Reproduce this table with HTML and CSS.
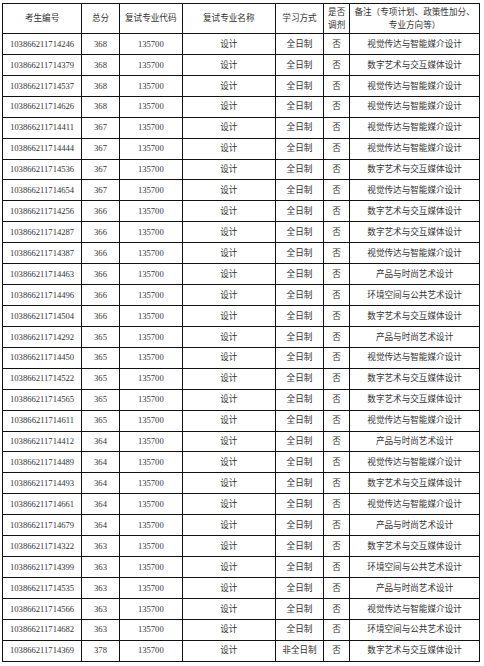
FILE: index.html
```html
<!DOCTYPE html>
<html lang="zh">
<head>
<meta charset="utf-8">
<link rel="stylesheet" href="styles.css">
</head>
<body>
<table class="list">
<colgroup>
<col class="c1"><col class="c2"><col class="c3"><col class="c4"><col class="c5"><col class="c6"><col class="c7">
</colgroup>
<thead>
<tr class="head">
<th>考生编号</th><th>总分</th><th>复试专业代码</th><th>复试专业名称</th><th>学习方式</th><th>是否<br>调剂</th><th>备注（专项计划、政策性加分、<br>专业方向等）</th>
</tr>
</thead>
<tbody>
<tr><td>103866211714246</td><td>368</td><td>135700</td><td>设计</td><td>全日制</td><td>否</td><td>视觉传达与智能媒介设计</td></tr>
<tr><td>103866211714379</td><td>368</td><td>135700</td><td>设计</td><td>全日制</td><td>否</td><td>数字艺术与交互媒体设计</td></tr>
<tr><td>103866211714537</td><td>368</td><td>135700</td><td>设计</td><td>全日制</td><td>否</td><td>视觉传达与智能媒介设计</td></tr>
<tr><td>103866211714626</td><td>368</td><td>135700</td><td>设计</td><td>全日制</td><td>否</td><td>视觉传达与智能媒介设计</td></tr>
<tr><td>103866211714411</td><td>367</td><td>135700</td><td>设计</td><td>全日制</td><td>否</td><td>视觉传达与智能媒介设计</td></tr>
<tr><td>103866211714444</td><td>367</td><td>135700</td><td>设计</td><td>全日制</td><td>否</td><td>视觉传达与智能媒介设计</td></tr>
<tr><td>103866211714536</td><td>367</td><td>135700</td><td>设计</td><td>全日制</td><td>否</td><td>数字艺术与交互媒体设计</td></tr>
<tr><td>103866211714654</td><td>367</td><td>135700</td><td>设计</td><td>全日制</td><td>否</td><td>视觉传达与智能媒介设计</td></tr>
<tr><td>103866211714256</td><td>366</td><td>135700</td><td>设计</td><td>全日制</td><td>否</td><td>数字艺术与交互媒体设计</td></tr>
<tr><td>103866211714287</td><td>366</td><td>135700</td><td>设计</td><td>全日制</td><td>否</td><td>数字艺术与交互媒体设计</td></tr>
<tr><td>103866211714387</td><td>366</td><td>135700</td><td>设计</td><td>全日制</td><td>否</td><td>视觉传达与智能媒介设计</td></tr>
<tr><td>103866211714463</td><td>366</td><td>135700</td><td>设计</td><td>全日制</td><td>否</td><td>产品与时尚艺术设计</td></tr>
<tr><td>103866211714496</td><td>366</td><td>135700</td><td>设计</td><td>全日制</td><td>否</td><td>环境空间与公共艺术设计</td></tr>
<tr><td>103866211714504</td><td>366</td><td>135700</td><td>设计</td><td>全日制</td><td>否</td><td>数字艺术与交互媒体设计</td></tr>
<tr><td>103866211714292</td><td>365</td><td>135700</td><td>设计</td><td>全日制</td><td>否</td><td>产品与时尚艺术设计</td></tr>
<tr><td>103866211714450</td><td>365</td><td>135700</td><td>设计</td><td>全日制</td><td>否</td><td>视觉传达与智能媒介设计</td></tr>
<tr><td>103866211714522</td><td>365</td><td>135700</td><td>设计</td><td>全日制</td><td>否</td><td>数字艺术与交互媒体设计</td></tr>
<tr><td>103866211714565</td><td>365</td><td>135700</td><td>设计</td><td>全日制</td><td>否</td><td>数字艺术与交互媒体设计</td></tr>
<tr><td>103866211714611</td><td>365</td><td>135700</td><td>设计</td><td>全日制</td><td>否</td><td>视觉传达与智能媒介设计</td></tr>
<tr><td>103866211714412</td><td>364</td><td>135700</td><td>设计</td><td>全日制</td><td>否</td><td>产品与时尚艺术设计</td></tr>
<tr><td>103866211714489</td><td>364</td><td>135700</td><td>设计</td><td>全日制</td><td>否</td><td>视觉传达与智能媒介设计</td></tr>
<tr><td>103866211714493</td><td>364</td><td>135700</td><td>设计</td><td>全日制</td><td>否</td><td>数字艺术与交互媒体设计</td></tr>
<tr><td>103866211714661</td><td>364</td><td>135700</td><td>设计</td><td>全日制</td><td>否</td><td>视觉传达与智能媒介设计</td></tr>
<tr><td>103866211714679</td><td>364</td><td>135700</td><td>设计</td><td>全日制</td><td>否</td><td>产品与时尚艺术设计</td></tr>
<tr><td>103866211714322</td><td>363</td><td>135700</td><td>设计</td><td>全日制</td><td>否</td><td>数字艺术与交互媒体设计</td></tr>
<tr><td>103866211714399</td><td>363</td><td>135700</td><td>设计</td><td>全日制</td><td>否</td><td>环境空间与公共艺术设计</td></tr>
<tr><td>103866211714535</td><td>363</td><td>135700</td><td>设计</td><td>全日制</td><td>否</td><td>产品与时尚艺术设计</td></tr>
<tr><td>103866211714566</td><td>363</td><td>135700</td><td>设计</td><td>全日制</td><td>否</td><td>视觉传达与智能媒介设计</td></tr>
<tr><td>103866211714682</td><td>363</td><td>135700</td><td>设计</td><td>全日制</td><td>否</td><td>环境空间与公共艺术设计</td></tr>
<tr><td>103866211714369</td><td>378</td><td>135700</td><td>设计</td><td>非全日制</td><td>否</td><td>数字艺术与交互媒体设计</td></tr>
</tbody>
</table>
</body>
</html>
```
FILE: styles.css
```css
html, body {
  margin: 0;
  padding: 0;
  background: #fff;
}
body {
  padding: 3px 0 0 2px;
  font-family: "Liberation Serif", "Noto Sans CJK SC", serif;
  color: #333;
}
.list {
  border-collapse: collapse;
  table-layout: fixed;
  width: 477px;
  font-size: 8.6px;
}
.c1 { width: 79.2px; }
.c2 { width: 37.6px; }
.c3 { width: 63px; }
.c4 { width: 93px; }
.c5 { width: 48.4px; }
.c6 { width: 26px; }
.c7 { width: 129.8px; }
.list th, .list td {
  border: 1px solid #111;
  padding: 0;
  text-align: center;
  vertical-align: middle;
  font-weight: normal;
  white-space: nowrap;
  line-height: 1;
}
.list th {
  line-height: 13px;
}
.head {
  height: 30px;
}
.list tbody tr {
  height: 20.93px;
}
```
